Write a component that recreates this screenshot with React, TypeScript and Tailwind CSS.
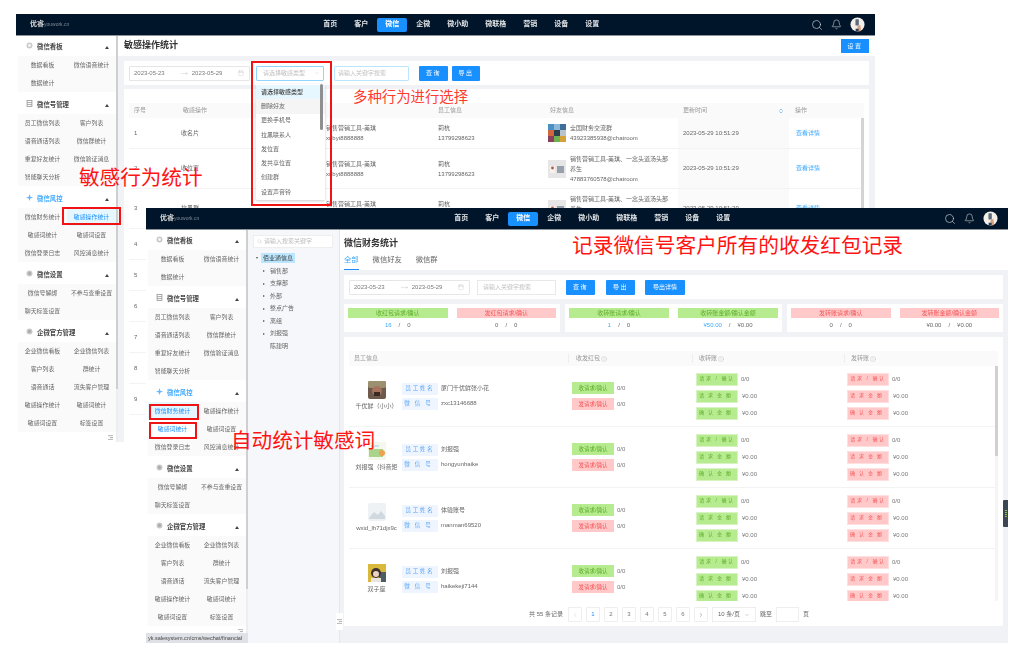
import { Bell, Calendar, ChevronDown, ChevronLeft, ChevronRight, ChevronsUpDown, Info, MoveRight, Search } from 'lucide-react'

type Group = { title: string; icon: string; blue?: boolean; items: string[] }

const topNav = ['首页', '客户', '微信', '企微', '微小助', '微联格', '营销', '设备', '设置']

const groups: Group[] = [
  { title: '微信看板', icon: 'board', items: ['数据看板', '微信语音统计', '数据统计'] },
  { title: '微信号管理', icon: 'doc', items: ['员工微信列表', '客户列表', '语音通话列表', '微信群统计', '重复好友统计', '微信验证消息', '智能聊天分析'] },
  { title: '微信风控', icon: 'risk', blue: true, items: ['微信财务统计', '敏感操作统计', '敏感词统计', '敏感词设置', '微信登录日志', '风控消息统计'] },
  { title: '微信设置', icon: 'gear', items: ['微信号解绑', '不参与查重设置', '聊天标签设置'] },
  { title: '企微官方管理', icon: 'gear', items: ['企业微信看板', '企业微信列表', '客户列表', '群统计', '语音通话', '流失客户管理', '敏感操作统计', '敏感词统计', '敏感词设置', '标签设置'] },
]

function GroupIcon({ kind }: { kind: string }) {
  if (kind === 'risk') {
    return (
      <svg viewBox="0 0 8 8" className="w-[7px] h-[7px] -mt-[3px]">
        <path d="M4 0 L5 3 L8 4 L5 5 L4 8 L3 5 L0 4 L3 3 Z" fill="#69b8ff" />
      </svg>
    )
  }
  if (kind === 'doc') {
    return (
      <svg viewBox="0 0 8 8" className="w-[7px] h-[7px] -mt-[3px]" fill="none" stroke="#888" strokeWidth="0.8">
        <rect x="1.2" y="0.5" width="5.6" height="7" />
        <path d="M1.2 3 H6.8 M1.2 5.3 H6.8" />
      </svg>
    )
  }
  return (
    <svg viewBox="0 0 8 8" className="w-[7px] h-[7px] -mt-[3px]">
      <circle cx="4" cy="4" r="3.4" fill="#c9c9c9" />
      <circle cx="4" cy="4" r="1.7" fill={kind === 'board' ? '#f4f4f4' : '#a9a9a9'} />
    </svg>
  )
}

function Sidebar({ active, linked }: { active: string; linked?: string }) {
  return (
    <div className="w-[102px] shrink-0 flex bg-white">
      <div className="w-[100px] flex flex-col">
        {groups.map((g, i) => (
          <div key={g.title}>
            <div className={i === 0 ? 'h-[20px] pt-[2px] flex items-center pl-[10px] pr-[7px]' : 'h-[22px] pt-[4px] flex items-center pl-[10px] pr-[7px]'}>
              <GroupIcon kind={g.icon} />
              <span className={g.blue ? 'ml-[4px] text-[6.4px] font-bold text-[#40a9ff]' : 'ml-[4px] text-[6.4px] font-bold text-[#444]'}>{g.title}</span>
              <span className="ml-auto w-0 h-0 border-x-[2.5px] border-x-transparent border-b-[3px] border-b-[#444]" />
            </div>
            <div className="ml-[2px] grid grid-cols-2 bg-[#fafafa]">
              {g.items.map((item) => (
                <div
                  key={item}
                  className={
                    item === active && g.blue
                      ? 'h-[18px] flex items-center justify-center text-[5.9px] whitespace-nowrap bg-[#e6f7ff] text-[#1890ff]'
                      : item === linked && g.blue
                        ? 'h-[18px] flex items-center justify-center text-[5.9px] whitespace-nowrap bg-white text-[#1890ff]'
                        : 'h-[18px] flex items-center justify-center text-[5.9px] whitespace-nowrap text-[#666]'
                  }
                >
                  {item}
                </div>
              ))}
            </div>
          </div>
        ))}
        <div className="flex-1 flex justify-end items-start pr-[3px] pt-[3px]">
          <svg viewBox="0 0 8 8" className="w-[5px] h-[5px]" fill="none" stroke="#888" strokeWidth="1">
            <path d="M0 1 H8 M3 4 H8 M0 7 H8" />
          </svg>
        </div>
      </div>
      <div className="w-[2px] bg-[#eee]">
        <div className="h-[87%] bg-[#cfcfcf]" />
      </div>
    </div>
  )
}

function TopBar({ offset }: { offset: string }) {
  return (
    <div className="h-[22px] shrink-0 bg-[#001529] border-b border-[#8c929a] flex items-center text-white">
      <div className="w-[14px] shrink-0" />
      <span className="text-[7px] font-bold text-[#ddd]">优睿</span>
      <span className="text-[5px] text-[#7f8a96]">youwork.cn</span>
      <div className={offset + ' flex gap-[1px]'}>
        {topNav.map((n) => (
          <div
            key={n}
            className={
              n === '微信'
                ? 'h-[14px] px-[8px] flex items-center rounded-[2px] bg-[#1890ff] text-[7px] font-bold'
                : 'h-[14px] px-[8px] flex items-center text-[7px] font-bold text-[#e3e5e8]'
            }
          >
            {n}
          </div>
        ))}
      </div>
      <div className="ml-auto pr-[10px] flex items-center gap-[8px]">
        <Search size={12} strokeWidth={1.3} className="text-[#d0d3d7]" />
        <Bell size={11} strokeWidth={1.3} className="text-[#d0d3d7]" />
        <svg viewBox="0 0 16 16" className="w-[15px] h-[15px]">
          <circle cx="8" cy="8" r="7.5" fill="#f3efe9" />
          <rect x="5.8" y="2.4" width="3.6" height="6.6" rx="0.6" fill="#5b6b7c" />
          <path d="M8 9 L11 8.5 L12 15 L8 15.5 Z" fill="#d9a27e" />
          <rect x="6" y="12.5" width="3.2" height="3" fill="#2f3f55" />
        </svg>
      </div>
    </div>
  )
}

function DateRange({ w }: { w: string }) {
  return (
    <div className={w + ' h-[15px] shrink-0 border border-[#e6e6e6] rounded-[1px] bg-white flex items-center pl-[4px] pr-[5px] text-[6px] text-[#7a7a7a]'}>
      <span>2023-05-23</span>
      <MoveRight size={7} strokeWidth={1} className="ml-[16px] text-[#aaa]" />
      <span className="ml-[4px]">2023-05-29</span>
      <Calendar size={6} strokeWidth={1} className="ml-auto text-[#aaa]" />
    </div>
  )
}

function Btn({ label, w, tracking }: { label: string; w: string; tracking?: string }) {
  return (
    <div className={w + ' h-[15px] shrink-0 rounded-[1px] bg-[#1890ff] text-white text-[6px] flex items-center justify-center ' + (tracking ?? '')}>
      {label}
    </div>
  )
}

const backRows = [
  { no: '1', h: 'h-[31px]', op: '收名片', staff: true, thumb: 'mosaic', lines: ['全国财务交流群'], id: '43923385938@chatroom' },
  { no: '2', h: 'h-[40px]', op: '收位置', staff: true, thumb: 'gray', lines: ['销售营销工具-美琪、一念头道汤头部', '养生'], id: '47883760578@chatroom' },
  { no: '3', h: 'h-[40px]', op: '拉黑群', staff: true, thumb: 'gray', lines: ['销售营销工具-美琪、一念头道汤头部', '养生'], id: '47883760578@chatroom' },
  { no: '4', h: 'h-[31px]' },
  { no: '5', h: 'h-[31px]' },
  { no: '6', h: 'h-[31px]' },
  { no: '7', h: 'h-[31px]' },
  { no: '8', h: 'h-[31px]' },
  { no: '9', h: 'h-[31px]' },
]

const gridCols = 'grid grid-cols-[49px_144px_111px_112px_133px_111px_76px]'

function Thumb({ kind }: { kind?: string }) {
  if (kind === 'mosaic') {
    return (
      <svg viewBox="0 0 18 18" className="w-[18px] h-[18px] shrink-0">
        <rect width="18" height="18" fill="#dfe6ee" />
        <rect width="6" height="6" fill="#4a90c4" />
        <rect x="6" width="6" height="6" fill="#8fb7d8" />
        <rect x="12" width="6" height="6" fill="#3d6e9c" />
        <rect y="6" width="6" height="6" fill="#d0653f" />
        <rect x="6" y="6" width="6" height="6" fill="#2c3c4c" />
        <rect x="12" y="6" width="6" height="6" fill="#b8c4cc" />
        <rect y="12" width="6" height="6" fill="#8b3f5d" />
        <rect x="6" y="12" width="6" height="6" fill="#6fb04f" />
        <rect x="12" y="12" width="6" height="6" fill="#d7a13a" />
      </svg>
    )
  }
  return (
    <svg viewBox="0 0 18 18" className="w-[18px] h-[18px] shrink-0">
      <rect width="18" height="18" fill="#e6e6e6" />
      <rect x="2" y="6" width="5" height="7" fill="#f7f2ee" />
      <circle cx="4.5" cy="8" r="1.4" fill="#b25a50" />
      <rect x="9" y="6" width="7" height="7" fill="#9a9fae" />
    </svg>
  )
}

function BackWindow() {
  return (
    <div className="absolute left-[16px] top-[14px] w-[859px] h-[428px] flex flex-col overflow-hidden bg-white blur-[0.4px]">
      <TopBar offset="ml-[246px]" />
      <div className="flex flex-1 min-h-0">
        <Sidebar active="敏感操作统计" />
        <div className="flex-1 flex flex-col bg-[#f0f2f5] min-w-0">
          <div className="h-[20px] shrink-0 bg-white flex items-center pl-[6px] pr-[6px]">
            <span className="text-[9px] font-bold text-[#333]">敏感操作统计</span>
            <div className="ml-auto w-[28px] h-[14px] bg-[#1890ff] text-white text-[6px] flex items-center justify-center tracking-[1.5px]">设置</div>
          </div>
          <div className="mx-[6px] mt-[5px] h-[24px] shrink-0 bg-white rounded-[1px] flex items-center pl-[5px]">
            <DateRange w="w-[121px]" />
            <div className="ml-[6px] w-[68px] h-[15px] shrink-0 border border-[#91d5ff] rounded-[1px] flex items-center pl-[6px] pr-[3px] text-[6px] text-[#bfbfbf]">
              请选择敏感类型
              <ChevronDown size={6} strokeWidth={1} className="ml-auto text-[#aaa]" />
            </div>
            <div className="ml-[10px] w-[75px] h-[15px] shrink-0 border border-[#bae7ff] rounded-[1px] flex items-center pl-[3px] text-[6px] text-[#bfbfbf]">请输入关键字搜索</div>
            <Btn label="查询" w="w-[29px] ml-[10px]" tracking="tracking-[1.5px]" />
            <Btn label="导出" w="w-[28px] ml-[4px]" tracking="tracking-[1.5px]" />
          </div>
          <div className="mx-[6px] mt-[4px] flex-1 min-h-0 bg-white rounded-[1px] px-[5px] pt-[14px] overflow-hidden">
            <div className={gridCols + ' h-[15px] bg-[#fafafa] text-[6px] text-[#999] items-center'}>
              <span className="pl-[5px]">序号</span>
              <span className="pl-[5px]">敏感操作</span>
              <span />
              <span className="pl-[5px]">员工信息</span>
              <span className="pl-[5px]">好友信息</span>
              <span className="pl-[5px] flex items-center justify-between pr-[5px]">
                更新时间
                <ChevronsUpDown size={6} className="text-[#1890ff]" />
              </span>
              <span className="pl-[6px]">操作</span>
            </div>
            <div className="relative">
              <div className="absolute right-0 top-0 w-[3px] h-full bg-[#d4d4d4]" />
              {backRows.map((r) => (
                <div key={r.no} className={gridCols + ' ' + r.h + ' border-b border-[#f3f3f3] text-[6px] text-[#666] items-center'}>
                  <span className="pl-[5px]">{r.no}</span>
                  <span className="pl-[3px]">{r.op}</span>
                  {r.staff ? (
                    <div className="pl-[4px] leading-[10px] whitespace-nowrap">
                      <div>销售营销工具-美琪</div>
                      <div>xnbyt8888888</div>
                    </div>
                  ) : (
                    <span />
                  )}
                  {r.staff ? (
                    <div className="pl-[5px] leading-[10px]">
                      <div>莉杭</div>
                      <div>13799298623</div>
                    </div>
                  ) : (
                    <span />
                  )}
                  {r.staff ? (
                    <div className="pl-[3px] flex items-center gap-[4px]">
                      <Thumb kind={r.thumb} />
                      <div className="leading-[10px]">
                        {r.lines?.map((l) => <div key={l}>{l}</div>)}
                        <div>{r.id}</div>
                      </div>
                    </div>
                  ) : (
                    <span />
                  )}
                  {r.staff ? <div className="h-full bg-[#fafafa] flex items-center pl-[5px]">2023-05-29 10:51:29</div> : <span />}
                  {r.staff ? <span className="pl-[7px] text-[#40a9ff]">查看详情</span> : <span />}
                </div>
              ))}
            </div>
          </div>
        </div>
      </div>
      <div className="absolute left-[240px] top-[70px] w-[69px] h-[116px] bg-white rounded-[1px] shadow-[0_1px_3px_rgba(0,0,0,0.2)] text-[6px] text-[#666] pt-[1px] overflow-hidden">
        {['请选择敏感类型', '删除好友', '更换手机号', '拉黑联系人', '发位置', '发共享位置', '创建群', '设置声音铃'].map((d, i) => (
          <div key={d} className={i === 0 ? 'h-[14.3px] flex items-center pl-[5px] bg-[#e6f7ff] text-[#444] font-medium' : i === 1 ? 'h-[14.3px] flex items-center pl-[5px] bg-[#f5f5f5]' : 'h-[14.3px] flex items-center pl-[5px]'}>
            {d}
          </div>
        ))}
        <div className="absolute right-[2px] top-0 w-[3px] h-[46px] rounded-[2px] bg-[#8f8f8f]" />
      </div>
    </div>
  )
}

const treeKids = ['销售部', '支撑部', '外部', '整点广告', '离组', '刘报强']

function TreePanel() {
  return (
    <div className="w-[92px] shrink-0 bg-[#f6f7fa] pl-[5px] pt-[5px] text-[6px] text-[#666] border-r border-[#e4e6ea]">
      <div className="w-[80px] h-[13px] bg-white border border-[#eee] flex items-center pl-[3px] gap-[2px] text-[#bbb]">
        <Search size={5} strokeWidth={1.4} />
        请输入搜索关键字
      </div>
      <div className="mt-[5px] h-[10px] flex items-center">
        <span className="w-0 h-0 ml-[3px] border-x-[1.5px] border-x-transparent border-t-[2.5px] border-t-[#555]" />
        <span className="ml-[3px] px-[2px] h-[10px] flex items-center bg-[#bae7ff] text-[#444]">佰业通信息</span>
      </div>
      <div className="mt-[2px]">
        {treeKids.map((k) => (
          <div key={k} className="h-[12.5px] flex items-center pl-[10px]">
            <span className="w-0 h-0 border-y-[1.5px] border-y-transparent border-l-[2.5px] border-l-[#555]" />
            <span className="ml-[5px]">{k}</span>
          </div>
        ))}
        <div className="h-[12.5px] flex items-center pl-[17px]">陈建明</div>
      </div>
    </div>
  )
}

function Stat({ label, tone, a, b, blue }: { label: string; tone: 'g' | 'r'; a: string; b: string; blue?: boolean }) {
  return (
    <div className="w-[100px] flex flex-col items-center">
      <div className={tone === 'g' ? 'w-full h-[10px] bg-[#b7eb8f] text-[#5fae2c] text-[6px] flex items-center justify-center' : 'w-full h-[10px] bg-[#ffc9c9] text-[#f5585a] text-[6px] flex items-center justify-center'}>{label}</div>
      <div className="mt-[3px] h-[8px] flex items-center gap-[7px] text-[6px] text-[#666]">
        <span className={blue ? 'text-[#40a9ff]' : ''}>{a}</span>
        <span>/</span>
        <span>{b}</span>
      </div>
    </div>
  )
}

function Avatar({ kind }: { kind: string }) {
  if (kind === 'photo') {
    return (
      <svg viewBox="0 0 18 18" className="w-[18px] h-[18px]">
        <rect width="18" height="18" rx="2" fill="#6d5a4c" />
        <rect width="18" height="7" rx="2" fill="#9b9170" />
        <circle cx="9" cy="10" r="5" fill="#a8735c" />
        <rect x="6" y="11" width="6" height="4" fill="#3a2a24" />
      </svg>
    )
  }
  if (kind === 'card') {
    return (
      <svg viewBox="0 0 18 18" className="w-[18px] h-[18px]">
        <rect width="18" height="18" fill="#f4f7ec" />
        <rect x="1" y="7" width="14" height="8" fill="#a9d58a" />
        <circle cx="14" cy="11" r="3" fill="#eda14e" />
        <rect x="3" y="3" width="8" height="2" fill="#cfe1ee" />
      </svg>
    )
  }
  if (kind === 'empty') {
    return (
      <svg viewBox="0 0 18 18" className="w-[18px] h-[18px]">
        <rect width="18" height="18" rx="2" fill="#eef2f5" />
        <path d="M1 15 L6 9 L10 12 L13 8 L17 13 V16 H1 Z" fill="#cfd9df" />
      </svg>
    )
  }
  return (
    <svg viewBox="0 0 18 18" className="w-[18px] h-[18px]">
      <rect width="18" height="18" fill="#d9b93c" />
      <rect x="11" y="8" width="7" height="10" fill="#4d5b62" />
      <circle cx="8" cy="9" r="5" fill="#3d3230" />
      <circle cx="8" cy="10" r="3" fill="#ecd2c4" />
      <rect x="3" y="14" width="10" height="4" fill="#e8e4e4" />
    </svg>
  )
}

const frontRows = [
  { avatar: 'photo', name: '千优鲜（小小）', staff: '厦门千优鲜张小花', wx: 'zxc13146688' },
  { avatar: 'card', name: '刘报强（抖音矩', staff: '刘报强', wx: 'hongyunhaike' },
  { avatar: 'empty', name: 'wxid_lh71djx9c', staff: '体验账号', wx: 'manman69520' },
  { avatar: 'girl', name: '双子座', staff: '刘报强', wx: 'haikekeji7144' },
]

function MoneyCol({ tone }: { tone: 'g' | 'r' }) {
  const tag = tone === 'g' ? 'bg-[#b7eb8f] text-[#5fae2c] border-[#d8f3c2]' : 'bg-[#ffc9c9] text-[#f5585a] border-[#ffe0e0]'
  return (
    <div className="flex flex-col gap-[4px] text-[6px] text-[#777]">
      <div className="flex items-center gap-[3px]">
        <span className={tag + ' w-[42px] h-[13px] border flex items-center justify-center text-[5px] tracking-[1.6px]'}>请求 / 确认</span>
        0/0
      </div>
      <div className="flex items-center gap-[4px]">
        <span className={tag + ' w-[42px] h-[13px] border flex items-center justify-center text-[5px] tracking-[4px]'}>请求金额</span>
        ¥0.00
      </div>
      <div className="flex items-center gap-[4px]">
        <span className={tag + ' w-[42px] h-[13px] border flex items-center justify-center text-[5px] tracking-[4px]'}>确认金额</span>
        ¥0.00
      </div>
    </div>
  )
}

const pageCell = 'w-[14px] h-[15px] border border-[#eee] rounded-[1px] flex items-center justify-center bg-white text-[6px] text-[#777]'

function FrontWindow() {
  return (
    <div className="absolute left-[146px] top-[208px] w-[862px] h-[435px] flex flex-col overflow-hidden bg-white blur-[0.4px]">
      <TopBar offset="ml-[247px]" />
      <div className="flex flex-1 min-h-0">
        <Sidebar active="微信财务统计" linked="敏感词统计" />
        <TreePanel />
        <div className="flex-1 flex flex-col bg-[#f0f2f5] min-w-0">
          <div className="h-[40px] shrink-0 bg-white pl-[4px]">
            <div className="pt-[6px] text-[9px] font-bold leading-[14px] text-[#333]">微信财务统计</div>
            <div className="mt-[5px] flex gap-[14px] text-[7.3px] text-[#666]">
              <span className="h-[15px] border-b border-[#1890ff] text-[#40a9ff]">全部</span>
              <span>微信好友</span>
              <span>微信群</span>
            </div>
          </div>
          <div className="mx-[4px] mt-[5px] h-[24px] shrink-0 bg-white flex items-center pl-[5px] mr-[5px]">
            <DateRange w="w-[121px]" />
            <div className="ml-[7px] w-[79px] h-[15px] border border-[#e8e8e8] flex items-center pl-[5px] text-[6px] text-[#bfbfbf]">请输入关键字搜索</div>
            <Btn label="查询" w="w-[29px] ml-[10px]" tracking="tracking-[1.5px]" />
            <Btn label="导出" w="w-[29px] ml-[11px]" tracking="tracking-[1.5px]" />
            <Btn label="导出详情" w="w-[40px] ml-[10px]" />
          </div>
          <div className="mx-[4px] mr-[5px] mt-[5px] h-[28px] shrink-0 flex gap-[5px]">
            <div className="w-[216px] bg-white flex gap-[9px] px-[4px] pt-[4px]">
              <Stat label="收红包请求/确认" tone="g" a="16" b="0" blue />
              <Stat label="发红包请求/确认" tone="r" a="0" b="0" />
            </div>
            <div className="w-[217px] bg-white flex gap-[9px] px-[4px] pt-[4px]">
              <Stat label="收转账请求/确认" tone="g" a="1" b="0" blue />
              <Stat label="收转账金额/确认金额" tone="g" a="¥50.00" b="¥0.00" blue />
            </div>
            <div className="w-[216px] bg-white flex gap-[9px] px-[4px] pt-[4px]">
              <Stat label="发转账请求/确认" tone="r" a="0" b="0" />
              <Stat label="发转账金额/确认金额" tone="r" a="¥0.00" b="¥0.00" />
            </div>
          </div>
          <div className="mx-[4px] mr-[5px] mt-[5px] flex-1 min-h-0 bg-white px-[5px] pt-[14px]">
            <div className="h-[15px] bg-[#fafafa] grid grid-cols-[219px_124px_152px_154px] items-center text-[6px] text-[#999]">
              <span className="pl-[5px]">员工信息</span>
              <span className="pl-[7px] flex items-center gap-[1px] border-l border-[#eee]">收发红包<Info size={6} strokeWidth={1} /></span>
              <span className="pl-[6px] flex items-center gap-[1px] border-l border-[#eee]">收转账<Info size={6} strokeWidth={1} /></span>
              <span className="pl-[6px] flex items-center gap-[1px] border-l border-[#eee]">发转账<Info size={6} strokeWidth={1} /></span>
            </div>
            <div className="h-[235px] overflow-hidden relative">
              <div className="absolute right-0 top-0 w-[3px] h-full bg-[#f5f5f5]">
                <div className="h-[90px] bg-[#d0d0d0]" />
              </div>
              {frontRows.map((r) => (
                <div key={r.wx} className="h-[61px] mr-[3px] border-b border-[#f3f3f3] grid grid-cols-[219px_124px_152px_151px] items-center">
                  <div className="flex items-center">
                    <div className="w-[52px] pl-[3px] flex flex-col items-center gap-[3px] text-[6px] text-[#666]">
                      <Avatar kind={r.avatar} />
                      <span className="w-[44px] text-center whitespace-nowrap overflow-hidden">{r.name}</span>
                    </div>
                    <div className="flex flex-col gap-[3px] ml-[1px] text-[6px] text-[#666]">
                      <div className="flex items-center gap-[3px]">
                        <span className="w-[36px] h-[12px] bg-[#eef5ff] text-[#5ba5f5] text-[5.5px] tracking-[1.8px] flex items-center justify-center">员工姓名</span>
                        {r.staff}
                      </div>
                      <div className="flex items-center gap-[3px]">
                        <span className="w-[36px] h-[12px] bg-[#eef5ff] text-[#5ba5f5] text-[5.5px] tracking-[5px] flex items-center justify-center">微信号</span>
                        {r.wx}
                      </div>
                    </div>
                  </div>
                  <div className="pl-[4px] flex flex-col gap-[4px] text-[6px] text-[#777]">
                    <div className="flex items-center gap-[3px]">
                      <span className="w-[42px] h-[12px] bg-[#b7eb8f] text-[#5fae2c] text-[5.5px] flex items-center justify-center">收请求/确认</span>
                      0/0
                    </div>
                    <div className="flex items-center gap-[3px]">
                      <span className="w-[42px] h-[12px] bg-[#ffc9c9] text-[#f5585a] text-[5.5px] flex items-center justify-center">发请求/确认</span>
                      0/0
                    </div>
                  </div>
                  <div className="pl-[4px]"><MoneyCol tone="g" /></div>
                  <div className="pl-[3px]"><MoneyCol tone="r" /></div>
                </div>
              ))}
            </div>
            <div className="mt-[6px] flex items-center pl-[180px] gap-[4px] text-[6px] text-[#666]">
              <span className="mr-[1px]">共 55 条记录</span>
              <span className={pageCell + ' text-[#ccc]'}><ChevronLeft size={6} /></span>
              {['1', '2', '3', '4', '5', '6'].map((p) => (
                <span key={p} className={p === '1' ? pageCell + ' border-[#1890ff] text-[#1890ff]' : pageCell}>{p}</span>
              ))}
              <span className={pageCell}><ChevronRight size={6} /></span>
              <span className="w-[44px] h-[15px] border border-[#eee] flex items-center justify-between px-[5px]">10 条/页<ChevronDown size={6} strokeWidth={1} /></span>
              <span>跳至</span>
              <span className="w-[23px] h-[15px] border border-[#eee]" />
              <span>页</span>
            </div>
          </div>
          <div className="h-[17px] shrink-0" />
        </div>
      </div>
      <div className="absolute left-[190px] top-[405px] w-[7px] h-[17px] bg-white flex items-center justify-center">
        <svg viewBox="0 0 8 8" className="w-[5px] h-[5px]" fill="none" stroke="#888" strokeWidth="1">
          <path d="M0 1 H8 M3 4 H8 M0 7 H8" />
        </svg>
      </div>
      <div className="absolute left-0 bottom-0 w-[102px] h-[10px] bg-[#dee1e6] text-[5.5px] text-[#444] flex items-center pl-[2px] whitespace-nowrap overflow-hidden">yk.salesystem.cn/cms/wechat/financial</div>
      <div className="absolute right-0 top-[292px] w-[5px] h-[27px] rounded-l-[1px] bg-[#3c4654] flex flex-col items-center justify-center gap-[1px]">
        <span className="w-[2px] h-[1px] bg-[#8bc34a]" />
        <span className="w-[2px] h-[1px] bg-[#8bc34a]" />
        <span className="w-[2px] h-[1px] bg-[#8bc34a]" />
        <span className="w-[2px] h-[1px] bg-[#8bc34a]" />
      </div>
    </div>
  )
}

export default function App() {
  return (
    <div className="relative w-[1020px] h-[656px] overflow-hidden bg-white font-['Liberation_Sans','Noto_Sans_CJK_SC',sans-serif]">
      <BackWindow />
      <FrontWindow />
      <div className="absolute left-[79px] top-[164px] text-[20.6px] leading-[28px] text-[#ff1414]">敏感行为统计</div>
      <div className="absolute left-[353px] top-[87px] text-[14.4px] leading-[20px] text-[#ff3b30]">多种行为进行选择</div>
      <div className="absolute left-[231px] top-[427px] text-[20.6px] leading-[28px] text-[#ff1414]">自动统计敏感词</div>
      <div className="absolute left-[572px] top-[232px] text-[20.7px] leading-[28px] text-[#ff1414]">记录微信号客户所有的收发红包记录</div>
      <div className="absolute left-[251px] top-[61px] w-[81px] h-[145px] border-2 border-[#f01414]" />
      <div className="absolute left-[62px] top-[207px] w-[59px] h-[18px] border-2 border-[#f01414]" />
      <div className="absolute left-[149px] top-[404px] w-[50px] h-[16px] border-2 border-[#f01414]" />
      <div className="absolute left-[149px] top-[422px] w-[48px] h-[17px] border-2 border-[#f01414]" />
    </div>
  )
}
